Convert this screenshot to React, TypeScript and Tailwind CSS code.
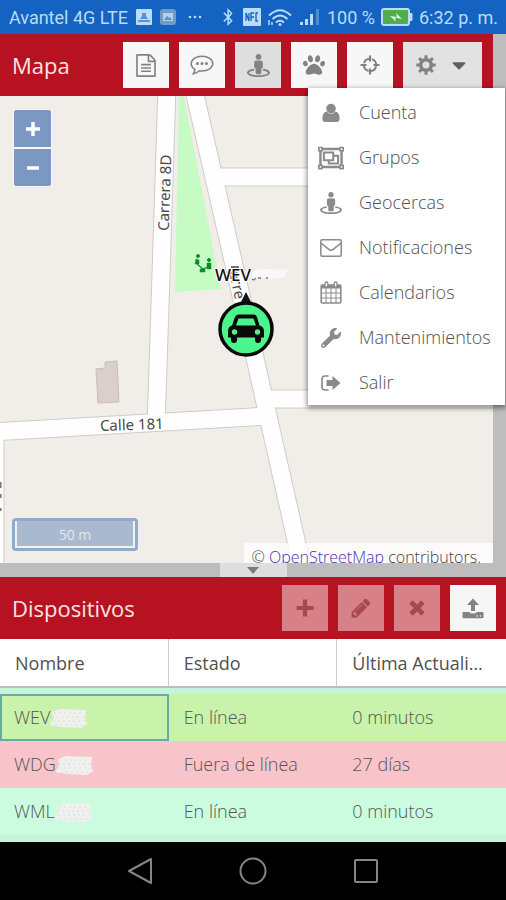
import type { ReactNode } from 'react';
import { FaBluetoothB, FaCaretDown, FaPaw, FaRegObjectGroup, FaStreetView, FaWrench } from 'react-icons/fa';

const FileIcon = () => (
  <svg viewBox="0 0 1536 1792" className="h-[23px] w-5" fill="currentColor">
    <path d="M1468 380q28 28 48 76t20 88v1152q0 40-28 68t-68 28h-1344q-40 0-68-28t-28-68v-1600q0-40 28-68t68-28h896q40 0 88 20t76 48zm-444-244v376h376q-10-29-22-41l-313-313q-12-12-41-22zm384 1528v-1024h-416q-40 0-68-28t-28-68v-416h-768v1536h1280zm-1024-864q0-14 9-23t23-9h704q14 0 23 9t9 23v64q0 14-9 23t-23 9h-704q-14 0-23-9t-9-23v-64zm736 224q14 0 23 9t9 23v64q0 14-9 23t-23 9h-704q-14 0-23-9t-9-23v-64q0-14 9-23t23-9h704zm0 256q14 0 23 9t9 23v64q0 14-9 23t-23 9h-704q-14 0-23-9t-9-23v-64q0-14 9-23t23-9h704z" />
  </svg>
);

const CommentIcon = () => (
  <svg viewBox="0 0 24 24" className="h-6 w-6" fill="none" stroke="currentColor" strokeWidth="1.5">
    <path d="M12 3.2c6 0 10.8 3.3 10.8 7.4S18 18 12 18c-.9 0-1.8-.1-2.6-.2-1.9 1.7-3.9 2.8-6.4 3.2 1-1.2 1.7-2.6 1.9-4.5C2.6 15.1 1.2 13 1.2 10.6c0-4.1 4.8-7.4 10.8-7.4z" strokeLinejoin="round" />
    <g fill="currentColor" stroke="none">
      <circle cx="7.5" cy="10.5" r="1.5" />
      <circle cx="12" cy="10.5" r="1.5" />
      <circle cx="16.5" cy="10.5" r="1.5" />
    </g>
  </svg>
);

const CrosshairIcon = () => (
  <svg viewBox="0 0 20 20" className="h-5 w-5" fill="none" stroke="currentColor">
    <circle cx="10" cy="10" r="6.2" strokeWidth="2" strokeDasharray="7.24 2.5" strokeDashoffset="-1.25" />
    <path d="M10 .5v6M10 13.5v6M.5 10h6M13.5 10h6" strokeWidth="2.2" />
  </svg>
);

const CogIcon = () => (
  <svg viewBox="0 0 20 20" className="h-5 w-5" fill="none" stroke="currentColor">
    <circle cx="10" cy="10" r="5.3" strokeWidth="3.6" />
    {[0, 45, 90, 135].map((a) => (
      <path key={a} d="M10 .3v4M10 15.7v4" strokeWidth="3" transform={`rotate(${a} 10 10)`} />
    ))}
  </svg>
);

const UserIcon = () => (
  <svg viewBox="0 0 20 20" className="h-5 w-5" fill="currentColor">
    <circle cx="10" cy="5.6" r="4.8" />
    <path d="M5.6 8.6Q7.4 11 10 11t4.400-2.400q4.200.6 4.200 7.400 0 3-3 3H4.400q-3 0-3-3 0-6.800 4.200-7.400z" />
  </svg>
);

const EnvelopeIcon = () => (
  <svg viewBox="0 0 22 18" className="h-[18px] w-[22px]" fill="none" stroke="currentColor" strokeWidth="1.5">
    <rect x=".8" y=".8" width="20.4" height="16.4" rx="1.5" />
    <path d="M1 4l7.8 6.3q2.2 1.8 4.4 0L21 4" />
  </svg>
);

const CalendarIcon = () => (
  <svg viewBox="0 0 22 23" className="h-[23px] w-[22px]" fill="none" stroke="currentColor">
    <rect x="1.2" y="4" width="19.6" height="18" rx="1" strokeWidth="1.6" />
    <path d="M1 4h20v3.5H1z" fill="currentColor" stroke="none" />
    <path d="M6 7v15M11 7v15M16 7v15M1 12h20M1 17h20" strokeWidth="1" />
    <rect x="5" y="1" width="2.8" height="5" rx="1.3" fill="#fff" strokeWidth="1.3" />
    <rect x="14.2" y="1" width="2.8" height="5" rx="1.3" fill="#fff" strokeWidth="1.3" />
  </svg>
);

const ExitIcon = () => (
  <svg viewBox="0 0 20 16" className="h-4 w-5" fill="none" stroke="currentColor">
    <path d="M7.5 1H4Q1 1 1 4v8q0 3 3 3h3.5" strokeWidth="1.6" />
    <path d="M5.5 5h6V1l8 7-8 7v-4h-6z" fill="currentColor" stroke="none" />
  </svg>
);

const PlusIcon = () => (
  <svg viewBox="0 0 18 18" className="h-[18px] w-[18px]" stroke="currentColor" strokeWidth="4.2">
    <path d="M9 .5v17M.5 9h17" />
  </svg>
);

const PencilIcon = () => (
  <svg viewBox="0 0 1792 1792" className="h-[22px] w-[22px]" fill="currentColor">
    <path d="M491 1536l91-91-235-235-91 91v107h128v128h107zm523-928q0-22-22-22-10 0-17 7l-542 542q-7 7-7 17 0 22 22 22 10 0 17-7l542-542q7-7 7-17zm-54-192l416 416-832 832h-416v-416zm683 96q0 53-37 90l-166 166-416-416 166-165q36-38 90-38 53 0 91 38l235 234q37 39 37 91z" />
  </svg>
);

const CrossIcon = () => (
  <svg viewBox="0 0 16 16" className="h-4 w-4" stroke="currentColor" strokeWidth="4.6">
    <path d="M2 2l12 12M14 2L2 14" />
  </svg>
);

const UploadIcon = () => (
  <svg viewBox="0 0 22 21" className="h-[21px] w-[22px]" fill="currentColor">
    <path d="M11 .5l6 6.5h-4v6H9V7H5z" />
    <path d="M1.5 14H7q1 1.600 4 1.600t4-1.600h5.500q1 0 1 1v4q0 1.300-1.300 1.300H1.800Q.5 20.300.5 19v-4q0-1 1-1z" />
    <circle cx="15" cy="18" r=".8" fill="#f6f6f6" />
    <circle cx="18.5" cy="18" r=".8" fill="#f6f6f6" />
  </svg>
);

const toolbar = [
  { label: 'Reportes', icon: <FileIcon />, bg: 'bg-[#f7f7f7]' },
  { label: 'Eventos', icon: <CommentIcon />, bg: 'bg-[#f7f7f7]' },
  { label: 'Mostrar geocercas', icon: <FaStreetView size={23} />, bg: 'bg-[#dedede]' },
  { label: 'Rutas en vivo', icon: <FaPaw size={22} />, bg: 'bg-[#f7f7f7]' },
  { label: 'Seguir', icon: <CrosshairIcon />, bg: 'bg-[#f7f7f7]' },
];

const menuItems: { label: string; icon: ReactNode }[] = [
  { label: 'Cuenta', icon: <UserIcon /> },
  { label: 'Grupos', icon: <FaRegObjectGroup size={26} /> },
  { label: 'Geocercas', icon: <FaStreetView size={22} /> },
  { label: 'Notificaciones', icon: <EnvelopeIcon /> },
  { label: 'Calendarios', icon: <CalendarIcon /> },
  { label: 'Mantenimientos', icon: <FaWrench size={20} /> },
  { label: 'Salir', icon: <ExitIcon /> },
];

const deviceActions = [
  { label: 'Agregar', icon: <PlusIcon /> },
  { label: 'Editar', icon: <PencilIcon /> },
  { label: 'Eliminar', icon: <CrossIcon /> },
];

const devices = [
  { name: 'WEV', status: 'En línea', updated: '0 minutos', row: 'bg-[#c9f2aa]', selected: true },
  { name: 'WDG', status: 'Fuera de línea', updated: '27 días', row: 'bg-[#f9c3ca]' },
  { name: 'WML', status: 'En línea', updated: '0 minutos', row: 'bg-[#cbfcdf]' },
];

function StatusBar() {
  return (
    <div className="flex h-[34px] items-center justify-between bg-[#1463c2] pr-2 pl-[9px] font-[Roboto,sans-serif] text-[18px] text-[#b9dcf8]">
      <div className="flex items-center gap-2">
        <span>Avantel 4G LTE</span>
        <svg viewBox="0 0 16 16" className="h-4 w-4">
          <rect width="16" height="16" rx="1" fill="#b9dcf8" />
          <path d="M2 11h12v2H2zM6 4h4v3l2 3H4l2-3z" fill="#4f93d8" />
        </svg>
        <svg viewBox="0 0 16 16" className="h-4 w-4">
          <rect width="16" height="16" rx="3" fill="#6d9cc9" />
          <rect x="3" y="4" width="10" height="8" fill="#b5cfe6" />
          <path d="M4 11l3-4 2 2 1-1 2 3z" fill="#5f8fbe" />
        </svg>
        <svg viewBox="0 0 14 4" className="ml-1 h-1 w-[14px]" fill="#b9dcf8">
          <circle cx="2" cy="2" r="1.3" />
          <circle cx="7" cy="2" r="1.3" />
          <circle cx="12" cy="2" r="1.3" />
        </svg>
      </div>
      <div className="flex items-center gap-[6px]">
        <FaBluetoothB size={18} />
        <svg viewBox="0 0 18 18" className="h-[18px] w-[18px]">
          <rect width="18" height="18" rx="1" fill="#b9dcf8" />
          <path d="M3 13V5l3 8V5M8 13V5h3M8 9h3M15 5h-2v8h2" fill="none" stroke="#1463c2" strokeWidth="1.3" />
        </svg>
        <svg viewBox="0 0 26 19" className="h-[19px] w-[26px]" fill="none" stroke="#b9dcf8" strokeWidth="2">
          <path d="M2 7.5Q13-3 24 7.5M5.5 11Q13 4 20.5 11M9 14.5Q13 11 17 14.5" />
          <circle cx="13" cy="16.5" r="1.5" fill="#b9dcf8" stroke="none" />
          <path d="M2 12v5M5 14v3" strokeWidth="1.5" />
        </svg>
        <svg viewBox="0 0 22 18" className="h-[18px] w-[22px]" fill="#b9dcf8">
          <path d="M1 14h3v3H1zM6 11h3v6H6zM11 6h3v11h-3z" />
          <path d="M17 1h3v16h-3z" opacity=".35" />
        </svg>
        <span>100 %</span>
        <svg viewBox="0 0 32 18" className="h-[18px] w-8">
          <rect x="1" y="1" width="27" height="16" rx="2" fill="#4fae4c" stroke="#b9dcf8" strokeWidth="2" />
          <path d="M29 5h1.5q1 0 1 1v6q0 1-1 1H29z" fill="#b9dcf8" />
          <path d="M9 8l7 1-1-4 6 6-7-1.5 1 4z" fill="#e6f7e8" />
        </svg>
        <span>6:32 p. m.</span>
      </div>
    </div>
  );
}

function SettingsMenu() {
  return (
    <nav className="absolute top-[54px] right-px z-10 w-[197px] bg-white pt-[2px] shadow-[0_2px_5px_1px_rgba(0,0,0,0.45)]">
      {menuItems.map((item) => (
        <button key={item.label} type="button" className="flex h-[45px] w-full items-center pl-[10px] text-left">
          <span className="flex w-[26px] justify-center text-[#8a8a8a]">{item.icon}</span>
          <span className="pl-[15px] text-[18px] font-light text-[#505050]">{item.label}</span>
        </button>
      ))}
    </nav>
  );
}

function Roads() {
  return (
    <>
      <path d="M167 -10L160 210L156 330" />
      <path d="M193 -10L242 204L268 320L303 475" />
      <path d="M216 81H520" />
      <path d="M-10 336L268 320" />
      <path d="M268 303H520" />
      <path d="M-5 336V480" />
    </>
  );
}

function MapView() {
  return (
    <div className="relative min-h-[300px] flex-1 overflow-hidden bg-[#f1eee9]">
      <svg viewBox="0 0 493 467" preserveAspectRatio="xMinYMin slice" className="absolute inset-0 h-full w-full font-['Noto_Sans',sans-serif]">
        <path d="M179 -4L183 -4L221 193L175 196z" fill="#c6fcc4" />
        <path d="M96 273l9-1v-6l12-1 2 41-21 1z" fill="#dacfcb" stroke="#cbbcb6" />
        {/* road casing, then the road itself */}
        <g fill="none" stroke="#cfccc8" strokeWidth="19"><Roads /></g>
        <g fill="none" stroke="#fefefe" strokeWidth="17"><Roads /></g>
        {/* playground */}
        <g fill="#118a2a" stroke="#118a2a">
          <circle cx="198" cy="160" r="1.5" />
          <circle cx="209" cy="164" r="1.5" />
          <path d="M196 163l3 1v4h-4zM207 167h4v6h-4zM200 173h5v3h-5z" strokeWidth=".5" />
          <path d="M197 168l6 5 7-3" fill="none" strokeWidth="1.2" />
        </g>
        <g fill="#4a4a4a" stroke="#fff" strokeWidth="2" paintOrder="stroke" textAnchor="middle">
          <text transform="translate(170 97) rotate(-88)" fontSize="15">Carrera 8D</text>
          <text transform="translate(132 334) rotate(-2)" fontSize="15">Calle 181</text>
          <text transform="translate(232 190) rotate(77)" fontSize="15">arre</text>
        </g>
        <path d="M0 386v6M0 398v4M0 412v3" stroke="#777" strokeWidth="3" />
        {/* vehicle marker */}
        <path d="M246 196l7 14h-14z" fill="#111" />
        <circle cx="246" cy="233" r="26" fill="#4bf58c" stroke="#0a0a0a" strokeWidth="3.5" />
        <path d="M235 221q.8-2.500 3.500-2.500h15q2.700 0 3.500 2.500l2.500 8.500q4.500 1 4.500 6v6h-3v2.500q0 3-3 3t-3-3v-2.500h-18v2.500q0 3-3 3t-3-3v-2.500h-3v-6q0-5 4-6z" fill="#0a0a0a" />
        <path d="M238.5 222.500h15l2.500 7h-20z" fill="#4bf58c" />
        <circle cx="234.5" cy="236" r="2.7" fill="#4bf58c" />
        <circle cx="257.5" cy="236" r="2.7" fill="#4bf58c" />
        <text x="215" y="185" fontSize="17" fontWeight="500" fill="#111" stroke="#fff" strokeWidth="2" paintOrder="stroke">WEV</text>
        <path d="M231 171h8" stroke="#444" strokeWidth="1.5" />
        <path d="M252 176q8-5 18-3t18 0l-3 8q-12 3-20 1t-13 1z" fill="#f8f8f8" />
        <path d="M252 183q2 2 4-1M258 182h3M266 182h2" stroke="#777" strokeWidth="1.3" fill="none" />
      </svg>

      <div className="absolute top-[13px] left-[13px] flex flex-col gap-[2px] rounded-xs bg-white/60 p-px text-white">
        <button type="button" aria-label="Acercar" className="flex h-[37px] w-[37px] items-center justify-center rounded-t-xs bg-[#7b98c2]">
          <svg viewBox="0 0 14 14" className="h-[14px] w-[14px]" stroke="currentColor" strokeWidth="3.5"><path d="M7 0v14M0 7h14" /></svg>
        </button>
        <button type="button" aria-label="Alejar" className="flex h-[37px] w-[37px] items-center justify-center rounded-b-xs bg-[#7b98c2]">
          <svg viewBox="0 0 14 14" className="h-[14px] w-[14px]" stroke="currentColor" strokeWidth="3.5"><path d="M1 7h12" /></svg>
        </button>
      </div>

      <div className="absolute bottom-3 left-3 rounded-sm bg-[#92abca] p-[3px]">
        <div className="h-[27px] w-[120px] border-2 border-t-0 border-[#eef2f7] bg-[#a9bad0] text-center text-[14px] leading-[27px] text-[#e2e8ef]">50 m</div>
      </div>

      <div className="absolute right-0 bottom-0 h-5 bg-white/75 pr-3 pl-2 text-[16px] leading-[28px] font-light text-[#444]">
        © <a href="#osm" className="text-[#4a35b0]">OpenStreetMap</a> contributors.
      </div>
    </div>
  );
}

function DeviceTable() {
  return (
    <div className="bg-[#c5f5d9] pb-[7px]">
      <table className="w-full table-fixed border-separate border-spacing-0 text-left text-[18px]">
        <thead>
          <tr className="h-[49px] bg-white text-[#505050]">
            <th className="border-r border-b-2 border-r-[#cfcfcf] border-b-[#bdbdbd] px-[15px] pt-[2px] font-normal">Nombre</th>
            <th className="border-r border-b-2 border-r-[#cfcfcf] border-b-[#bdbdbd] px-[15px] pt-[2px] font-normal">Estado</th>
            <th className="truncate border-b-2 border-b-[#bdbdbd] px-[15px] pt-[2px] font-normal">Última Actualización</th>
          </tr>
        </thead>
        <tbody className="font-light text-[#555]">
          <tr aria-hidden="true" className="h-[6px]"><td colSpan={3} className="p-0" /></tr>
          {devices.map((d) => (
            <tr key={d.name} className={`h-[47px] ${d.row}`}>
              <td className={d.selected ? 'px-[14px] outline-2 -outline-offset-2 outline-[#68a9ab]' : 'px-[14px]'}>
                <span className="flex items-center">
                  {d.name}
                  {/* hidden part of the plate */}
                  <svg viewBox="0 0 40 22" className="-ml-px h-[22px] w-10">
                    <path d="M3 5l8-3 26 1-1 8 2 6-6 4-20-1-12-2 4-6z" fill="#f0f1ef" />
                    <path d="M5 6h30M3 10h32M4 14h32M6 18h28" stroke="#d8dbd8" strokeWidth="1" strokeDasharray="2 3" />
                  </svg>
                </span>
              </td>
              <td className="px-[15px]">{d.status}</td>
              <td className="px-[15px]">{d.updated}</td>
            </tr>
          ))}
        </tbody>
      </table>
    </div>
  );
}

export default function App() {
  return (
    <div className="flex min-h-screen flex-col overflow-hidden bg-[#bdbdbd] font-['Open_Sans',sans-serif]">
      <StatusBar />

      <main className="flex flex-1 flex-col">
        <section className="relative flex flex-1 flex-col pr-[13px]">
          <header className="flex h-[62px] items-center justify-between bg-[#b71222] pr-[11px] pl-3">
            <h1 className="text-[22px] text-[#fbe3e3]">Mapa</h1>
            <div className="flex gap-[10px] text-[#828282]">
              {toolbar.map((b) => (
                <button key={b.label} type="button" aria-label={b.label} className={`flex h-[46px] w-[46px] items-center justify-center ${b.bg}`}>
                  {b.icon}
                </button>
              ))}
              <button type="button" aria-label="Configuración" className="flex h-[46px] w-[79px] items-center justify-center gap-3 bg-[#e2e2e2]">
                <CogIcon />
                <FaCaretDown size={22} className="text-[#606060]" />
              </button>
            </div>
          </header>
          <MapView />
          <SettingsMenu />
        </section>

        <div className="flex h-[14px] justify-center">
          <button type="button" aria-label="Contraer" className="flex w-[67px] items-center justify-center bg-[#dedede]">
            <svg viewBox="0 0 12 7" className="h-[7px] w-3" fill="#7c7c7c"><path d="M0 0h12L6 7z" /></svg>
          </button>
        </div>

        <section>
          <header className="flex h-[62px] items-center justify-between bg-[#b71222] pr-[10px] pl-3">
            <h2 className="text-[22px] text-[#fbe3e3]">Dispositivos</h2>
            <div className="flex gap-[10px] text-[#a84652]">
              {deviceActions.map((a) => (
                <button key={a.label} type="button" disabled aria-label={a.label} className="flex h-[46px] w-[46px] items-center justify-center bg-[#d78088]">
                  {a.icon}
                </button>
              ))}
              <button type="button" aria-label="Enviar comando" className="flex h-[46px] w-[46px] items-center justify-center bg-[#f6f6f6] text-[#828282]">
                <UploadIcon />
              </button>
            </div>
          </header>
          <DeviceTable />
        </section>
      </main>

      <footer className="flex h-[58px] items-center justify-center gap-[86px] bg-black text-[#858585]">
        <button type="button" aria-label="Atrás">
          <svg viewBox="0 0 26 28" className="h-7 w-[26px]" fill="none" stroke="currentColor" strokeWidth="2" strokeLinejoin="round"><path d="M24 2v24L2 14z" /></svg>
        </button>
        <button type="button" aria-label="Inicio">
          <svg viewBox="0 0 28 28" className="h-7 w-7" fill="none" stroke="currentColor" strokeWidth="2"><circle cx="14" cy="14" r="12.5" /></svg>
        </button>
        <button type="button" aria-label="Recientes">
          <svg viewBox="0 0 26 26" className="h-[26px] w-[26px]" fill="none" stroke="currentColor" strokeWidth="2"><rect x="2" y="2" width="22" height="22" rx="1" /></svg>
        </button>
      </footer>
    </div>
  );
}
